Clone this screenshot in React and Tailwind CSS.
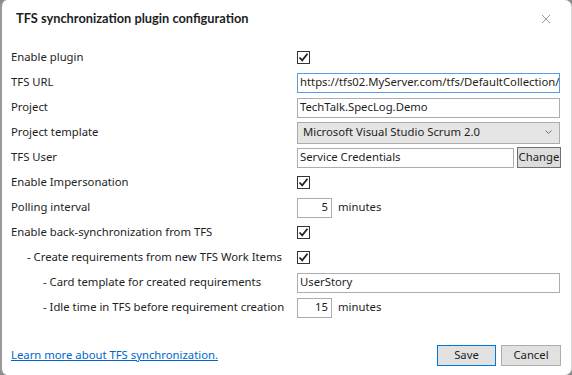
import React from "react";

const font = { fontFamily: '"Noto Sans", "Open Sans", sans-serif' };
const titleFont = { fontFamily: 'Lato, "Noto Sans", sans-serif' };

function Check() {
  return (
    <div className="w-[13px] h-[13px] border border-[#333333] bg-white flex items-center justify-center">
      <svg width="11" height="11" viewBox="0 0 11 11">
        <path d="M1.5 5.5 L4.2 8.3 L9.5 1.8" fill="none" stroke="#222222" strokeWidth="1.8" />
      </svg>
    </div>
  );
}

function Row({ label, indent = 0, children }) {
  const pad = indent === 0 ? "pl-0" : indent === 1 ? "pl-[16px]" : "pl-[32px]";
  return (
    <div className="flex items-center h-[25px]">
      <div className={`w-[286px] shrink-0 ${pad} text-[11.3px] text-[#1e1e1e] whitespace-nowrap`}>{label}</div>
      <div className="flex-1 flex items-center">{children}</div>
    </div>
  );
}

function TextBox({ value, className = "", align = "left", focused = false }) {
  return (
    <div
      className={`h-[20px] border ${focused ? "border-[#569de5]" : "border-[#abadb3]"} bg-white flex items-center px-[2px] text-[11.3px] text-[#1e1e1e] whitespace-nowrap overflow-hidden ${align === "right" ? "justify-end pr-[3px]" : ""} ${className}`}
    >
      {value}
    </div>
  );
}

export default function App() {
  return (
    <div className="w-[572px] h-[375px] bg-[#8c8c8c] overflow-hidden" style={font}>
      <div className="w-[572px] h-[375px] bg-white rounded-[7px] border-l-2 border-l-[#9a9a9a] border-r border-r-[#d8d8d8] flex flex-col">
        <div className="h-[37px] flex items-center justify-between pl-[14px] pr-[20px] pt-[1px]">
          <div className="text-[12.8px] font-bold text-[#1e1e1e]" style={titleFont}>TFS synchronization plugin configuration</div>
          <svg width="10" height="10" viewBox="0 0 10 10">
            <path d="M1 1 L9 9 M9 1 L1 9" stroke="#9a9a9a" strokeWidth="1" />
          </svg>
        </div>
        <div className="pl-[9px] pr-[10px] pt-[8px] flex flex-col">
          <Row label="Enable plugin"><Check /></Row>
          <Row label="TFS URL">
            <TextBox value="https://tfs02.MyServer.com/tfs/DefaultCollection/" className="w-[263px]" focused />
          </Row>
          <Row label="Project">
            <TextBox value="TechTalk.SpecLog.Demo" className="w-[263px]" />
          </Row>
          <Row label="Project template">
            <div className="w-[263px] h-[22px] border border-[#acacac] bg-[#e5e5e5] flex items-center justify-between pl-[5px] pr-[7px] text-[11.3px] text-[#1e1e1e]">
              <span>Microsoft Visual Studio Scrum 2.0</span>
              <svg width="7" height="5" viewBox="0 0 7 5">
                <path d="M0.5 0.5 L3.5 3.5 L6.5 0.5" fill="none" stroke="#707070" strokeWidth="1" />
              </svg>
            </div>
          </Row>
          <Row label="TFS User">
            <TextBox value="Service Credentials" className="w-[217px]" />
            <div className="ml-[3px] w-[44px] h-[21px] border border-[#707070] bg-[#dddddd] flex items-center justify-center text-[11.3px] text-[#1e1e1e]">Change</div>
          </Row>
          <Row label="Enable Impersonation"><Check /></Row>
          <Row label="Polling interval">
            <TextBox value="5" className="w-[35px]" align="right" />
            <span className="ml-[6px] text-[11.3px] text-[#1e1e1e]">minutes</span>
          </Row>
          <Row label="Enable back-synchronization from TFS"><Check /></Row>
          <Row label="- Create requirements from new TFS Work Items" indent={1}><Check /></Row>
          <Row label="- Card template for created requirements" indent={2}>
            <TextBox value="UserStory" className="w-[263px]" />
          </Row>
          <Row label="- Idle time in TFS before requirement creation" indent={2}>
            <TextBox value="15" className="w-[35px]" align="right" />
            <span className="ml-[6px] text-[11.3px] text-[#1e1e1e]">minutes</span>
          </Row>
        </div>
        <div className="mt-auto mb-[9px] pl-[9px] pr-[10px] flex items-center justify-between">
          <a className="text-[11.3px] text-[#0066cc] underline">Learn more about TFS synchronization.</a>
          <div className="flex gap-[5px]">
            <div className="w-[59px] h-[21px] border border-[#0078d7] bg-[#e1e1e1] flex items-center justify-center text-[11.3px] text-[#1e1e1e]">Save</div>
            <div className="w-[60px] h-[21px] border border-[#adadad] bg-[#e1e1e1] flex items-center justify-center text-[11.3px] text-[#1e1e1e]">Cancel</div>
          </div>
        </div>
      </div>
    </div>
  );
}
